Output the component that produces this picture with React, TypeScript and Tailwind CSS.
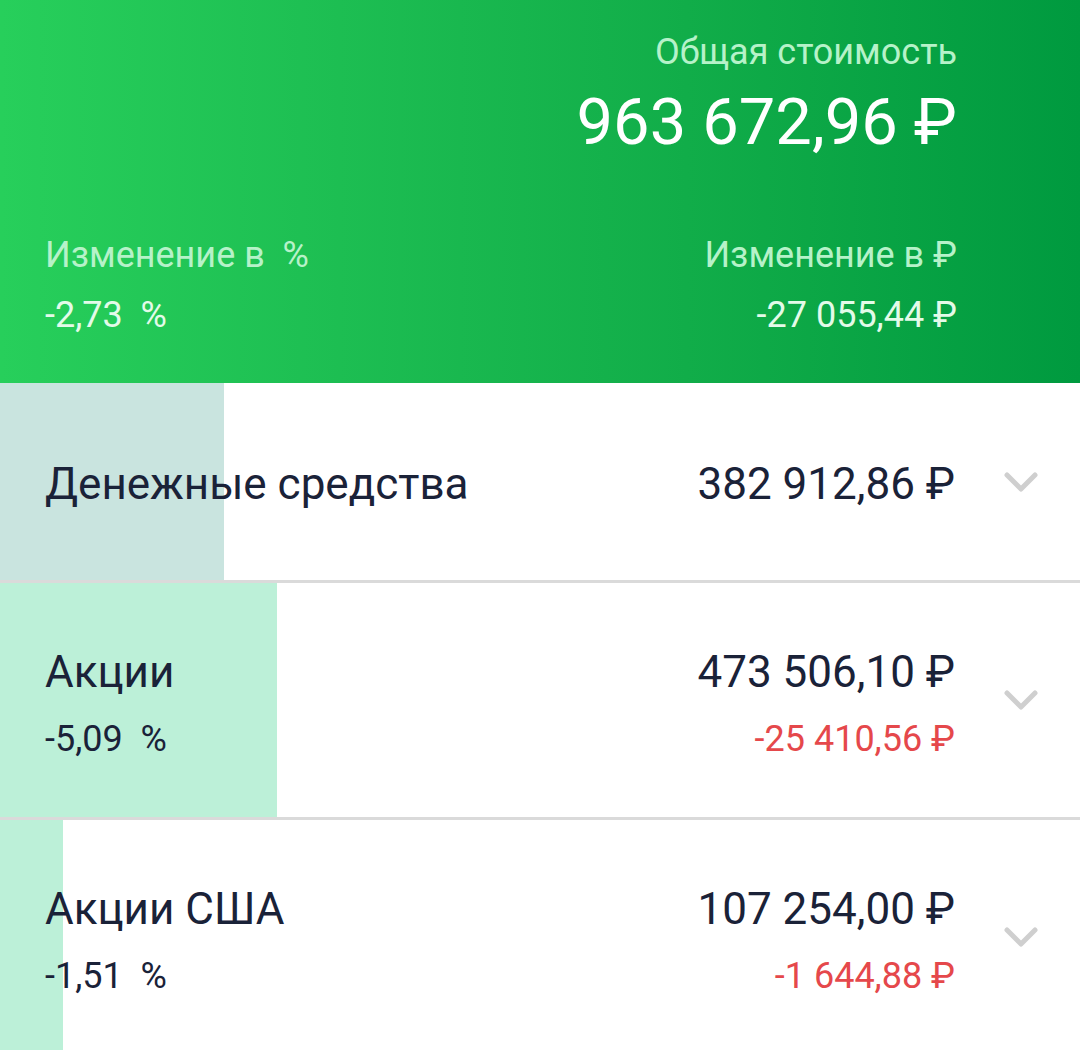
type Row = {
  name: string;
  amount: string;
  pct?: string;
  change?: string;
  barWidth: number;
  barColor: string;
  height: number;
};

const rows: Row[] = [
  { name: 'Денежные средства', amount: '382 912,86 ₽', barWidth: 224, barColor: '#c9e4df', height: 200 },
  { name: 'Акции', amount: '473 506,10 ₽', pct: '-5,09  %', change: '-25 410,56 ₽', barWidth: 277, barColor: '#bcf0d8', height: 237 },
  { name: 'Акции США', amount: '107 254,00 ₽', pct: '-1,51  %', change: '-1 644,88 ₽', barWidth: 63, barColor: '#bcf0d8', height: 237 },
];

function Chevron() {
  return (
    <svg width="36" height="24" viewBox="0 0 36 24" fill="none">
      <polyline points="4,5 18,19 32,5" stroke="#cfcfcf" strokeWidth="5" strokeLinecap="round" strokeLinejoin="round" />
    </svg>
  );
}

function AssetRow({ row }: { row: Row }) {
  return (
    <div className="relative flex items-center border-b-[3px] border-[#dadada]" style={{ height: row.height }}>
      {/* share of portfolio */}
      <div className="absolute inset-y-0 left-0" style={{ width: row.barWidth, background: row.barColor }} />
      <div className="relative flex flex-1 items-center justify-between pl-[45px] pt-[4px]">
        <div className="flex flex-col gap-[21px]">
          <span className="text-[44px] leading-[52px] text-[#1a2238]">{row.name}</span>
          {row.pct && <span className="text-[36px] leading-[40px] text-[#1a2238] whitespace-pre">{row.pct}</span>}
        </div>
        <div className="flex flex-col items-end gap-[21px]">
          <span className="text-[44px] leading-[52px] text-[#1a2238]">{row.amount}</span>
          {row.change && <span className="text-[36px] leading-[40px] text-[#e5484b]">{row.change}</span>}
        </div>
      </div>
      <div className="relative flex w-[125px] justify-center pl-[6px]">
        <Chevron />
      </div>
    </div>
  );
}

export default function App() {
  return (
    <div className="w-[1080px] h-[1050px] overflow-hidden bg-white" style={{ fontFamily: 'Roboto, "Noto Sans", sans-serif' }}>
      {/* Header */}
      <div className="h-[383px] bg-gradient-to-r from-[#27cf5b] to-[#009a3f] pl-[45px] pr-[123px] pt-[30px]">
        <div className="flex flex-col items-end">
          <span className="text-[36px] leading-[44px] text-[#b6f2c9]">Общая стоимость</span>
          <span className="mt-[10px] text-[65px] leading-[76px] text-white">963 672,96 ₽</span>
        </div>
        <div className="mt-[73px] flex justify-between">
          <div className="flex flex-col gap-[16px]">
            <span className="text-[36px] leading-[44px] text-[#b6f2c9] whitespace-pre">Изменение в  %</span>
            <span className="text-[36px] leading-[44px] text-[#e3fbe9] whitespace-pre">-2,73  %</span>
          </div>
          <div className="flex flex-col items-end gap-[16px]">
            <span className="text-[36px] leading-[44px] text-[#b6f2c9]">Изменение в ₽</span>
            <span className="text-[36px] leading-[44px] text-[#e3fbe9]">-27 055,44 ₽</span>
          </div>
        </div>
      </div>
      {rows.map(r => (
        <AssetRow key={r.name} row={r} />
      ))}
    </div>
  );
}
